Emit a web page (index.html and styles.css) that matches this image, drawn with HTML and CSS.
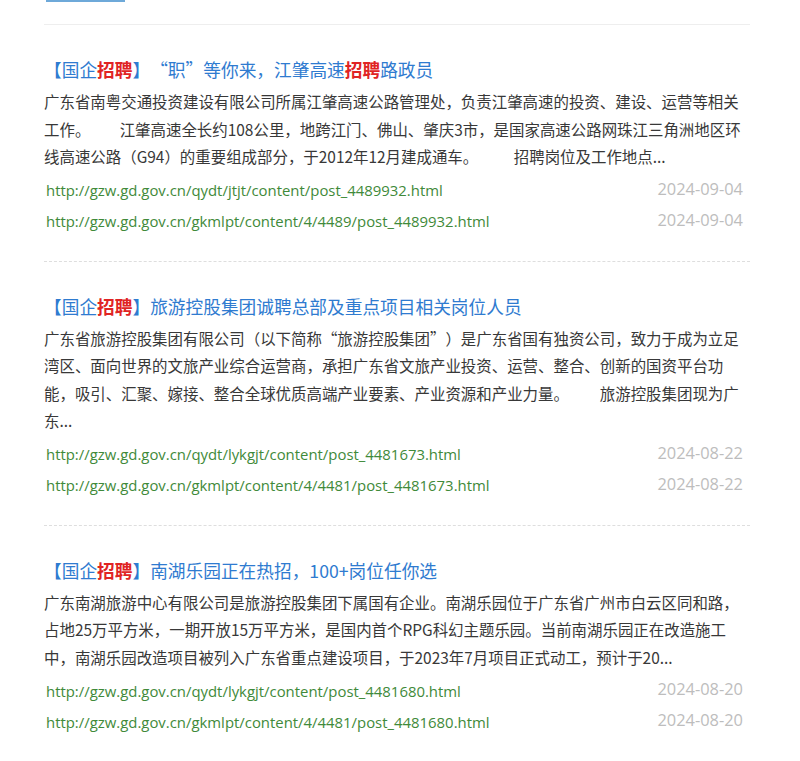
FILE: index.html
```html
<!DOCTYPE html>
<html lang="zh-CN">
<head>
<meta charset="utf-8">
<title>国企招聘</title>
<link rel="stylesheet" href="styles.css">
</head>
<body>
<div class="page">
  <div class="tabbar"><span class="tab"></span></div>
  <ul class="list">
    <li class="item">
      <h3 class="title">【国企<b>招聘</b>】<span class="ql">“</span>职<span class="qr">”</span>等你来，江肇高速<b>招聘</b>路政员</h3>
      <p class="desc">广东省南粤交通投资建设有限公司所属江肇高速公路管理处，负责江肇高速的投资、建设、运营等相关工作。<span class="gap gap-s"></span>江肇高速全长约108公里，地跨江门、佛山、肇庆3市，是国家高速公路网珠江三角洲地区环<br>线高速公路（G94）的重要组成部分，于2012年12月建成通车。<span class="gap gap-l"></span>招聘岗位及工作地点...</p>
      <div class="links">
        <div class="link"><span class="url">http://gzw.gd.gov.cn/qydt/jtjt/content/post_4489932.html</span><span class="date">2024-09-04</span></div>
        <div class="link"><span class="url">http://gzw.gd.gov.cn/gkmlpt/content/4/4489/post_4489932.html</span><span class="date">2024-09-04</span></div>
      </div>
    </li>
    <li class="item">
      <h3 class="title">【国企<b>招聘</b>】旅游控股集团诚聘总部及重点项目相关岗位人员</h3>
      <p class="desc">广东省旅游控股集团有限公司（以下简称<span class="ql">“</span>旅游控股集团<span class="qr">”</span>）是广东省国有独资公司，致力于成为立足湾区、面向世界的文旅产业综合运营商，承担广东省文旅产业投资、运营、整合、创新的国资平台功能，吸引、汇聚、嫁接、整合全球优质高端产业要素、产业资源和产业力量。<span class="gap"></span>旅游控股集团现为广东...</p>
      <div class="links">
        <div class="link"><span class="url">http://gzw.gd.gov.cn/qydt/lykgjt/content/post_4481673.html</span><span class="date">2024-08-22</span></div>
        <div class="link"><span class="url">http://gzw.gd.gov.cn/gkmlpt/content/4/4481/post_4481673.html</span><span class="date">2024-08-22</span></div>
      </div>
    </li>
    <li class="item">
      <h3 class="title">【国企<b>招聘</b>】南湖乐园正在热招，100+岗位任你选</h3>
      <p class="desc">广东南湖旅游中心有限公司是旅游控股集团下属国有企业。南湖乐园位于广东省广州市白云区同和路，占地25万平方米，一期开放15万平方米，是国内首个RPG科幻主题乐园。当前南湖乐园正在改造施工中，南湖乐园改造项目被列入广东省重点建设项目，于2023年7月项目正式动工，预计于20...</p>
      <div class="links">
        <div class="link"><span class="url">http://gzw.gd.gov.cn/qydt/lykgjt/content/post_4481680.html</span><span class="date">2024-08-20</span></div>
        <div class="link"><span class="url">http://gzw.gd.gov.cn/gkmlpt/content/4/4481/post_4481680.html</span><span class="date">2024-08-20</span></div>
      </div>
    </li>
  </ul>
</div>
</body>
</html>
```
FILE: styles.css
```css
html, body {
  margin: 0;
  padding: 0;
  background: #fff;
}
body {
  font-family: "Noto Sans CJK SC", "Noto Sans", sans-serif;
  color: #333;
}
.page {
  width: 706px;
  margin-left: 44px;
}
.tabbar {
  height: 25px;
  border-bottom: 1px solid #eeeeee;
  box-sizing: border-box;
}
.tab {
  display: block;
  width: 79px;
  height: 2px;
  margin-left: 2px;
  background: #6ea9d9;
}
.list {
  list-style: none;
  margin: 0;
  padding: 0;
}
.item {
  padding: 30px 0 24px;
  border-bottom: 1px dashed #dedede;
}
.title {
  margin: 0;
  font-size: 17.7px;
  line-height: 28px;
  font-weight: normal;
  color: #2f7bd0;
}
.title b {
  color: #e02424;
  font-weight: bold;
}
.ql, .qr {
  display: inline-block;
  width: 1em;
}
.ql {
  text-align: right;
}
.qr {
  text-align: left;
}
.gap {
  display: inline-block;
  width: 2em;
}
.gap-s {
  width: 1.9em;
}
.gap-l {
  width: 2.3em;
}
.desc {
  margin: 5px 0 0;
  font-size: 15.45px;
  line-height: 27.5px;
  color: #383838;
}
.links {
  margin-top: 4px;
}
.link {
  display: flex;
  justify-content: space-between;
  align-items: center;
  height: 31px;
  padding: 0 7px 0 2px;
}
.url {
  font-family: "Open Sans", "Noto Sans", sans-serif;
  font-size: 14.9px;
  color: #3f8a3a;
}
.date {
  font-family: "Open Sans", "Noto Sans", sans-serif;
  font-size: 16.4px;
  color: #bdbdbd;
  position: relative;
  top: -2px;
}
```
